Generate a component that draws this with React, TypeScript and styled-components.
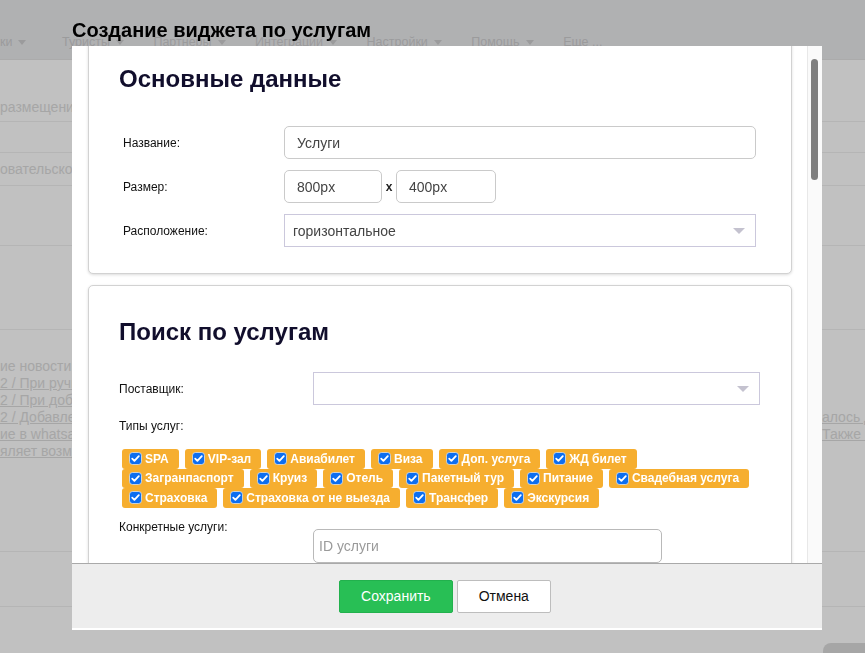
import React from 'react'
import styled, { createGlobalStyle } from 'styled-components'

const GlobalStyle = createGlobalStyle`
  html, body {
    margin: 0;
    padding: 0;
    height: 100%;
  }
  body {
    font-family: "Liberation Sans", Arial, sans-serif;
    background: #fff;
    overflow: hidden;
  }
  #root {
    height: 100%;
  }
`

/* ---------- page under the overlay ---------- */

const Page = styled.div`
  height: 100%;
  background: #fff;
  color: #dcdcdc;
  font-size: 13px;
`

const TopBar = styled.div`
  height: 60px;
  background: #e9eaec;
  display: flex;
  align-items: flex-end;
  gap: 29.5px;
  padding-bottom: 10px;
  box-sizing: border-box;
  border-bottom: 1px solid #e2e2e2;
`

const NavItem = styled.span<{ $first?: boolean }>`
  color: #cdcdcf;
  font-size: 12.5px;
  white-space: nowrap;
  display: flex;
  align-items: center;
  gap: 6px;
  margin-right: ${(p) => (p.$first ? 6 : 0)}px;
`

const Caret = styled.i`
  width: 0;
  height: 0;
  border-left: 4px solid transparent;
  border-right: 4px solid transparent;
  border-top: 5px solid #cdcdcf;
`

const Section = styled.div<{ $h: number; $align?: string }>`
  height: ${(p) => p.$h}px;
  border-bottom: 1px solid #efefef;
  display: flex;
  align-items: ${(p) => p.$align || 'center'};
  box-sizing: border-box;
  padding-bottom: ${(p) => (p.$align === 'flex-end' ? 6 : 0)}px;
  white-space: nowrap;
  font-size: 14px;
`

const News = styled.div`
  height: 222px;
  border-bottom: 1px solid #efefef;
  box-sizing: border-box;
  padding-top: 28px;
  font-size: 14px;
  line-height: 17px;
`

const NewsLine = styled.div<{ $link?: boolean }>`
  display: flex;
  justify-content: space-between;
  white-space: nowrap;
  text-decoration: ${(p) => (p.$link ? 'underline' : 'none')};
`

const Tail = styled.span`
  width: 43px;
  overflow: hidden;
`

const Floating = styled.div`
  position: fixed;
  right: -40px;
  bottom: -16px;
  width: 82px;
  height: 26px;
  border-radius: 8px;
  background: #dcdcdc;
`

/* ---------- modal ---------- */

const Overlay = styled.div`
  position: fixed;
  inset: 0;
  background: rgba(0, 0, 0, 0.245);
`

const Modal = styled.div`
  position: fixed;
  left: 72px;
  top: 18px;
  width: 750px;
`

const ModalTitle = styled.h1`
  margin: 0 0 4px;
  font-size: 20px;
  line-height: 24px;
  font-weight: 700;
  color: #000;
`

const ModalBody = styled.div`
  background: #fff;
  display: flex;
  flex-direction: column;
  padding-bottom: 2px;
`

const MainArea = styled.div`
  height: 517px;
  display: flex;
`

const ScrollArea = styled.div`
  flex: 1;
  overflow: hidden;
`

const ScrollContent = styled.div`
  margin-top: -30px;
  padding: 16px 15px 16px 16px;
`

const ScrollTrack = styled.div`
  width: 15px;
  background: #fafafa;
  border-left: 1px solid #e8e8e8;
  box-sizing: border-box;
  padding: 13px 4px 0 3px;
`

const Thumb = styled.div`
  height: 121px;
  border-radius: 4px;
  background: #7f7f7f;
`

const Card = styled.section<{ $pr: number }>`
  background: #fff;
  border: 1px solid #d2d2d2;
  border-radius: 5px;
  box-shadow: 0 1px 3px rgba(0, 0, 0, 0.14);
  padding: 32px ${(p) => p.$pr}px 26px 30px;
  margin-bottom: 11px;
`

const Heading = styled.h2<{ $mb: number }>`
  margin: 0 0 ${(p) => p.$mb}px;
  font-size: 24px;
  line-height: 28px;
  font-weight: 700;
  color: #110e2c;
`

const Row = styled.div<{ $top?: boolean; $mt?: number }>`
  display: flex;
  align-items: ${(p) => (p.$top ? 'flex-start' : 'center')};
  margin-top: ${(p) => p.$mt || 0}px;
  margin-bottom: 11px;

  &:last-child {
    margin-bottom: 0;
  }
`

const Label = styled.label<{ $w: number; $indent: number }>`
  width: ${(p) => p.$w}px;
  padding-left: ${(p) => p.$indent}px;
  box-sizing: border-box;
  font-size: 12px;
  line-height: 14px;
  color: #111;
  flex-shrink: 0;
`

const BlockLabel = styled.div<{ $mt: number; $mb: number }>`
  margin: ${(p) => p.$mt}px 0 ${(p) => p.$mb}px;
  font-size: 12px;
  line-height: 14px;
  color: #111;
`

const TextInput = styled.div<{ $w: number; $mt?: number; $placeholder?: boolean }>`
  width: ${(p) => p.$w}px;
  height: ${(p) => (p.$placeholder ? 34 : 33)}px;
  margin-top: ${(p) => p.$mt || 0}px;
  box-sizing: border-box;
  border: 1px solid ${(p) => (p.$placeholder ? '#b9b9b9' : '#cacaca')};
  border-radius: 5px;
  padding: 0 ${(p) => (p.$placeholder ? 5 : 12)}px;
  display: flex;
  align-items: center;
  font-size: 14px;
  color: ${(p) => (p.$placeholder ? '#9a9a9a' : '#444')};
`

const SizeSep = styled.span`
  width: 14px;
  text-align: center;
  font-size: 12px;
  font-weight: 700;
  color: #222;
`

const Select = styled.div<{ $w: number }>`
  width: ${(p) => p.$w}px;
  height: 33px;
  box-sizing: border-box;
  border: 1px solid #cbc8dc;
  padding: 0 10px 0 8px;
  display: flex;
  align-items: center;
  justify-content: space-between;
  font-size: 14px;
  color: #444;
`

const SelectArrow = styled.i`
  width: 0;
  height: 0;
  border-left: 6px solid transparent;
  border-right: 6px solid transparent;
  border-top: 6px solid #c4c2cf;
  margin-left: auto;
`

const TagList = styled.div`
  display: flex;
  flex-wrap: wrap;
  column-gap: 6px;
  padding: 0 2px 0 3px;
`

const Tag = styled.label`
  height: 19.5px;
  display: flex;
  align-items: center;
  gap: 3px;
  padding: 0 10px 0 7px;
  background: #f6ae2f;
  border-radius: 3px;
  color: #fff;
  font-size: 12px;
  font-weight: 700;
  white-space: nowrap;
`

const Footer = styled.div`
  height: 65px;
  box-sizing: border-box;
  border-top: 1px solid #a9a9a9;
  background: #ededed;
  display: flex;
  align-items: center;
  justify-content: center;
  gap: 4px;
  padding-right: 4px;
`

const Button = styled.button<{ $primary?: boolean }>`
  height: 33px;
  padding: 0 21px;
  min-width: ${(p) => (p.$primary ? 112 : 92)}px;
  border: 1px solid ${(p) => (p.$primary ? '#22b14d' : '#bdbdbd')};
  border-radius: 2px;
  background: ${(p) => (p.$primary ? '#28bf55' : '#fff')};
  color: ${(p) => (p.$primary ? '#fff' : '#111')};
  font-family: "Liberation Sans", Arial, sans-serif;
  font-size: 14px;
`

function Check() {
  return (
    <svg width="13" height="13" viewBox="0 0 13 13">
      <rect x="0.5" y="0.5" width="12" height="12" rx="3" fill="#0d6ef0" stroke="#fff" strokeWidth="0.6" />
      <path d="M3.2 6.7 L5.4 8.9 L9.8 4.1" fill="none" stroke="#fff" strokeWidth="1.8" strokeLinecap="round" strokeLinejoin="round" />
    </svg>
  )
}

const serviceTypes = [
  'SPA',
  'VIP-зал',
  'Авиабилет',
  'Виза',
  'Доп. услуга',
  'ЖД билет',
  'Загранпаспорт',
  'Круиз',
  'Отель',
  'Пакетный тур',
  'Питание',
  'Свадебная услуга',
  'Страховка',
  'Страховка от не выезда',
  'Трансфер',
  'Экскурсия',
]

const navItems = ['ки', 'Туристы', 'Партнеры', 'Интеграции', 'Настройки', 'Помощь']

export default function App() {
  return (
    <>
      <GlobalStyle />
      <Page>
        <TopBar>
          {navItems.map((n, i) => (
            <NavItem key={n} $first={i === 0}>
              {n} <Caret />
            </NavItem>
          ))}
          <NavItem>Еще ...</NavItem>
        </TopBar>
        <Section $h={62} $align="flex-end">размещения</Section>
        <Section $h={31} />
        <Section $h={33}>овательское</Section>
        <Section $h={60} />
        <Section $h={84} />
        <News>
          <NewsLine>ие новости:</NewsLine>
          <NewsLine $link>2 / При ручном вводе</NewsLine>
          <NewsLine $link>2 / При добавлении</NewsLine>
          <NewsLine $link>
            <span>2 / Добавлена возможность</span>
            <Tail>алось до</Tail>
          </NewsLine>
          <NewsLine $link>
            <span>ие в whatsapp</span>
            <Tail>Также н</Tail>
          </NewsLine>
          <NewsLine $link>яляет возможность</NewsLine>
        </News>
        <Section $h={55} />
        <Floating />
      </Page>

      <Overlay />
      <Modal>
        <ModalTitle>Создание виджета по услугам</ModalTitle>
        <ModalBody>
          <MainArea>
            <ScrollArea>
              <ScrollContent>
                <Card $pr={35}>
                  <Heading $mb={33}>Основные данные</Heading>
                  <Row>
                    <Label $w={165} $indent={4}>Название:</Label>
                    <TextInput $w={472}>Услуги</TextInput>
                  </Row>
                  <Row>
                    <Label $w={165} $indent={4}>Размер:</Label>
                    <TextInput $w={98}>800px</TextInput>
                    <SizeSep>x</SizeSep>
                    <TextInput $w={100}>400px</TextInput>
                  </Row>
                  <Row>
                    <Label $w={165} $indent={4}>Расположение:</Label>
                    <Select $w={472}>
                      горизонтальное
                      <SelectArrow />
                    </Select>
                  </Row>
                </Card>

                <Card $pr={31}>
                  <Heading $mb={26}>Поиск по услугам</Heading>
                  <Row>
                    <Label $w={194} $indent={0}>Поставщик:</Label>
                    <Select $w={447}>
                      <SelectArrow />
                    </Select>
                  </Row>
                  <BlockLabel $mt={14} $mb={16}>Типы услуг:</BlockLabel>
                  <TagList>
                    {serviceTypes.map((t) => (
                      <Tag key={t}>
                        <Check />
                        {t}
                      </Tag>
                    ))}
                  </TagList>
                  <Row $top $mt={12}>
                    <Label $w={194} $indent={0}>Конкретные услуги:</Label>
                    <TextInput $w={349} $mt={9} $placeholder>
                      ID услуги
                    </TextInput>
                  </Row>
                </Card>
              </ScrollContent>
            </ScrollArea>
            <ScrollTrack>
              <Thumb />
            </ScrollTrack>
          </MainArea>
          <Footer>
            <Button $primary>Сохранить</Button>
            <Button>Отмена</Button>
          </Footer>
        </ModalBody>
      </Modal>
    </>
  )
}
